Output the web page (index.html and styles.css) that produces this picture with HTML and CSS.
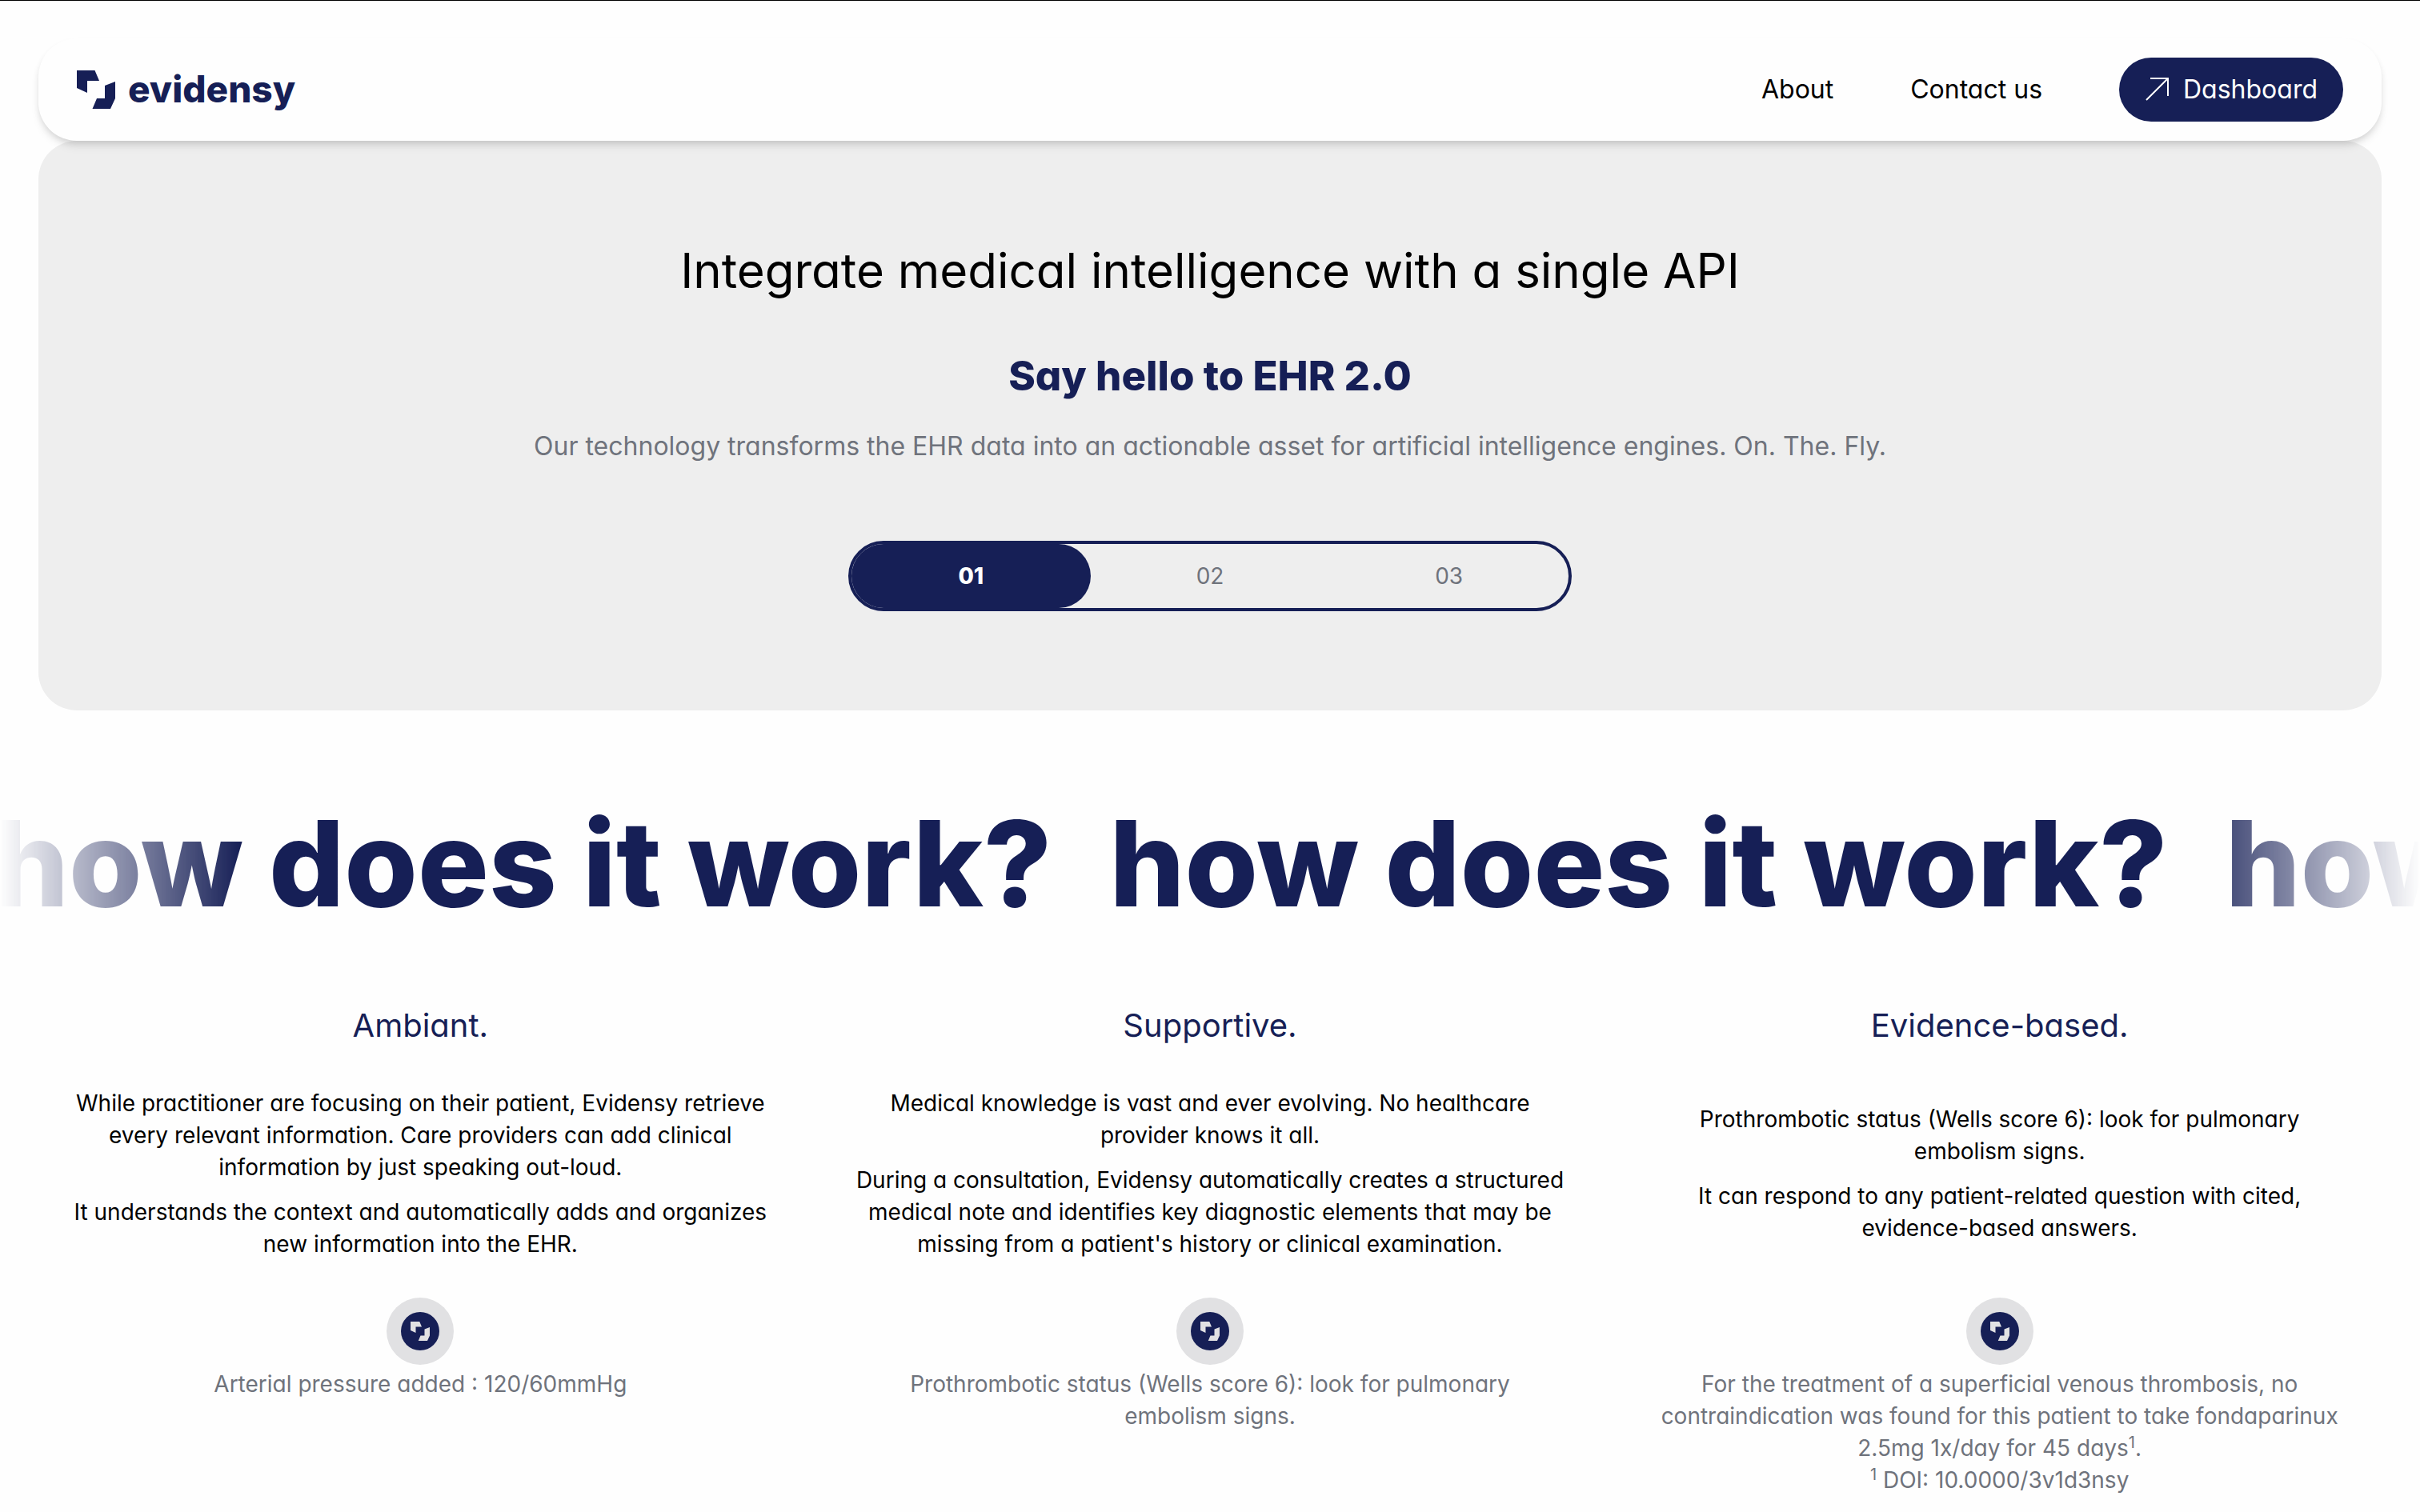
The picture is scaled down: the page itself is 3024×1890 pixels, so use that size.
FILE: index.html
```html
<!DOCTYPE html>
<html lang="en">
<head>
<meta charset="utf-8">
<meta name="viewport" content="width=device-width, initial-scale=1">
<title>Evidensy</title>
<link rel="stylesheet" href="styles.css">
</head>
<body>
<svg class="defs" aria-hidden="true">
  <symbol id="mark" viewBox="0 0 48 48">
    <path d="M0 0H22.500L28 13H13V28L0 22ZM48 14V35L42 48H19.500L25 35H35V19Z"/>
  </symbol>
</svg>

<header class="topbar">
  <a class="brand" href="#">
    <svg class="brand-mark" aria-hidden="true"><use href="#mark"/></svg>
    <span class="brand-name">evidensy</span>
  </a>
  <nav class="nav">
    <a href="#about">About</a>
    <a href="#contact">Contact us</a>
    <a class="cta" href="#dashboard">
      <svg class="cta-icon" viewBox="0 0 32 32" aria-hidden="true"><path d="M2 29L29 2M7 2H29V24"/></svg>
      <span>Dashboard</span>
    </a>
  </nav>
</header>

<main>
  <section class="hero">
    <h1>Integrate medical intelligence with a single API</h1>
    <h2>Say hello to EHR 2.0</h2>
    <p>Our technology transforms the EHR data into an actionable asset for artificial intelligence engines. On. The. Fly.</p>
    <div class="steps">
      <button class="step step-active" type="button">01</button>
      <button class="step" type="button">02</button>
      <button class="step" type="button">03</button>
    </div>
  </section>

  <section class="marquee">
    <div class="marquee-track">
      <span>how does it work?</span>
      <span aria-hidden="true">how does it work?</span>
      <span aria-hidden="true">how does it work?</span>
    </div>
  </section>

  <section class="features">
    <article class="feature">
      <h3>Ambiant.</h3>
      <div class="feature-text">
        <p>While practitioner are focusing on their patient, Evidensy retrieve every relevant information. Care providers can add clinical information by just speaking out-loud.</p>
        <p>It understands the context and automatically adds and organizes new information into the EHR.</p>
      </div>
      <div class="answer">
        <span class="badge"><span class="badge-disc"><svg class="badge-mark" aria-hidden="true"><use href="#mark"/></svg></span></span>
        <p>Arterial pressure added : 120/60mmHg</p>
      </div>
    </article>

    <article class="feature">
      <h3>Supportive.</h3>
      <div class="feature-text">
        <p>Medical knowledge is vast and ever evolving. No healthcare provider knows it all.</p>
        <p>During a consultation, Evidensy automatically creates a structured medical note and identifies key diagnostic elements that may be missing from a patient's history or clinical examination.</p>
      </div>
      <div class="answer">
        <span class="badge"><span class="badge-disc"><svg class="badge-mark" aria-hidden="true"><use href="#mark"/></svg></span></span>
        <p>Prothrombotic status (Wells score 6): look for pulmonary embolism&nbsp;signs.</p>
      </div>
    </article>

    <article class="feature">
      <h3>Evidence-based.</h3>
      <div class="feature-text">
        <p>Prothrombotic status (Wells score 6): look for pulmonary embolism&nbsp;signs.</p>
        <p>It can respond to any patient-related question with cited, evidence-based answers.</p>
      </div>
      <div class="answer">
        <span class="badge"><span class="badge-disc"><svg class="badge-mark" aria-hidden="true"><use href="#mark"/></svg></span></span>
        <p>For the treatment of a superficial venous thrombosis, no contraindication was found for this patient to take fondaparinux 2.5mg 1x/day for 45 days<sup>1</sup>.<br><sup>1</sup> DOI: 10.0000/3v1d3nsy</p>
      </div>
    </article>
  </section>
</main>
</body>
</html>
```
FILE: styles.css
```css
:root {
  --navy: #161f56;
  --panel: #eeeeee;
  --muted: #6f737c;
}

* { box-sizing: border-box; margin: 0; }

body {
  border-top: 1px solid #000;
  background: #fefefe;
  color: #000;
  font: 28px/40px Inter, "Liberation Sans", sans-serif;
  font-feature-settings: "cv11";
  overflow-x: hidden;
}

a { color: inherit; text-decoration: none; }

.defs { display: none; }

.topbar {
  position: relative;
  z-index: 1;
  display: flex;
  align-items: center;
  justify-content: space-between;
  margin: 47px 48px 0;
  padding: 24px 48px;
  border-radius: 48px;
  background: #fefefe;
  box-shadow: 0 8px 12px -2px rgba(0, 0, 0, .1), 0 4px 8px -2px rgba(0, 0, 0, .1);
}

.brand {
  display: flex;
  align-items: center;
  gap: 16px;
  color: var(--navy);
}

.brand-mark { width: 48px; height: 48px; fill: currentColor; }

.brand-name {
  padding-bottom: 2px;
  font-size: 46px;
  line-height: 48px;
  font-weight: 800;
}

.nav {
  display: flex;
  align-items: center;
  gap: 96px;
  font-size: 32px;
}

.cta {
  display: flex;
  align-items: center;
  gap: 16px;
  padding: 20px 32px;
  border-radius: 40px;
  background: var(--navy);
  color: #fff;
}

.cta-icon { width: 32px; height: 32px; fill: none; stroke: currentColor; stroke-width: 2; }

.hero {
  display: flex;
  flex-direction: column;
  align-items: center;
  margin: 0 48px;
  padding: 124px 48px;
  border-radius: 48px;
  background: var(--panel);
  text-align: center;
}

.hero h1 { font-size: 60px; line-height: 76px; font-weight: 400; }

.hero h2 {
  margin-top: 64px;
  color: var(--navy);
  font-size: 51px;
  line-height: 60px;
  font-weight: 800;
}

.hero p {
  margin-top: 38px;
  color: var(--muted);
  font-size: 32px;
}

.steps {
  display: flex;
  width: 904px;
  max-width: 100%;
  margin-top: 98px;
  border: 4px solid var(--navy);
  border-radius: 44px;
}

.step {
  flex: 1;
  padding: 20px 0;
  border: 0;
  border-radius: 40px;
  background: none;
  color: var(--muted);
  font: inherit;
}

.step-active { background: var(--navy); color: #fff; font-weight: 800; }

.marquee {
  margin-top: 96px;
  overflow: hidden;
  -webkit-mask-image: linear-gradient(90deg, transparent, #000 10%, #000 90%, transparent);
  mask-image: linear-gradient(90deg, transparent, #000 10%, #000 90%, transparent);
}

.marquee-track {
  display: flex;
  gap: 72px;
  width: max-content;
  margin-left: -8px;
  color: var(--navy);
  font-size: 148px;
  line-height: 192px;
  font-weight: 800;
}

.features {
  display: grid;
  grid-template-columns: repeat(3, 1fr);
  grid-template-rows: auto auto auto;
  column-gap: 32px;
  row-gap: 47px;
  padding: 76px 48px 0;
  text-align: center;
}

.feature {
  display: grid;
  grid-row: span 3;
  grid-template-rows: subgrid;
  padding: 0 32px;
}

.feature h3 {
  color: var(--navy);
  font-size: 40px;
  line-height: 60px;
  font-weight: 400;
}

.feature-text {
  display: flex;
  flex-direction: column;
  justify-content: center;
  gap: 16px;
}

.answer {
  display: flex;
  flex-direction: column;
  align-items: center;
  gap: 4px;
  color: var(--muted);
}

.badge {
  display: flex;
  padding: 18px;
  border-radius: 50%;
  background: #e1e1e3;
}

.badge-disc {
  display: flex;
  padding: 12px;
  border-radius: 50%;
  background: var(--navy);
}

.badge-mark { width: 24px; height: 24px; fill: #e1e1e3; }

sup { font-size: 20px; line-height: 0; }
```
